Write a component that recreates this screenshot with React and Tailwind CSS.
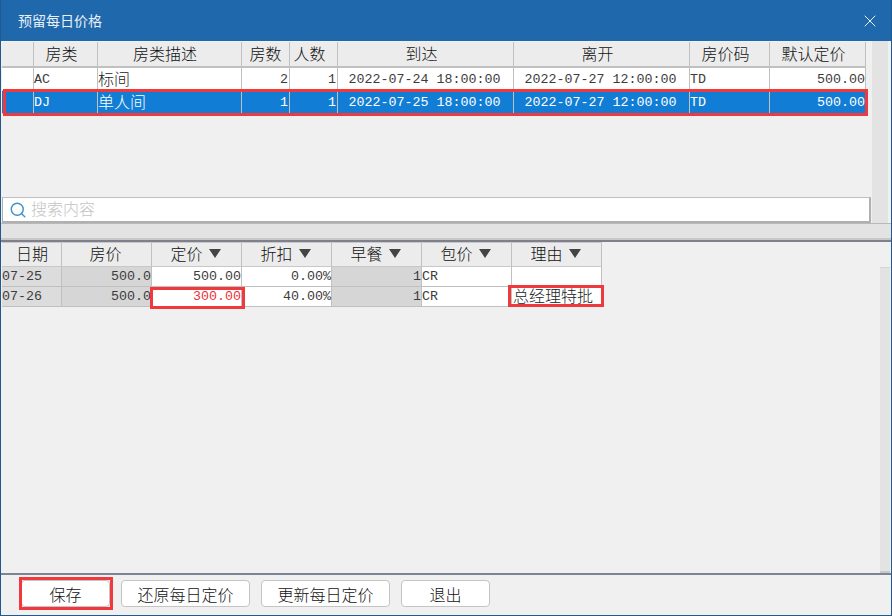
import React from "react";
import { Search, X } from "lucide-react";

const cjk = "font-['Noto_Sans_CJK_SC','Liberation_Sans',sans-serif] text-[16px] font-light";
const mono = "font-['Liberation_Mono','Noto_Sans_CJK_SC',monospace] text-[13.33px] text-[#3c3c3c]";

function Cell({ w, align = "l", kind = "mono", extra = "", children }) {
  const a = align === "r" ? "justify-end" : align === "c" ? "justify-center" : "justify-start";
  return (
    <div className={`${w} ${a} ${kind === "cjk" ? cjk : mono} ${extra} flex h-full shrink-0 items-center whitespace-nowrap border-r border-[#c0c0c0] leading-none`}>
      {children}
    </div>
  );
}

const topW = ["w-[32px]", "w-[64px]", "w-[144px]", "w-[48px]", "w-[48px]", "w-[176px]", "w-[176px]", "w-[80px]", "w-[96px]"];
const topHead = ["", "房类", "房类描述", "房数", "人数", "到达", "离开", "房价码", "默认定价"];
const topHeadPad = ["", "pr-[8px]", "pr-[9px]", "", "pr-[8px]", "pr-[8px]", "pr-[8px]", "pr-[8px]", "pr-[8px]"];
const topAlign = ["l", "l", "l", "r", "r", "c", "c", "l", "r"];
const topRowPad = ["", "", "", "pr-px", "pr-px", "pr-[2px]", "pr-[2px]", "", ""];
const topRows = [
  ["", "AC", "标间", "2", "1", "2022-07-24 18:00:00", "2022-07-27 12:00:00", "TD", "500.00"],
  ["", "DJ", "单人间", "1", "1", "2022-07-25 18:00:00", "2022-07-27 12:00:00", "TD", "500.00"],
];

const lowW = ["w-[60px]", "w-[90px]", "w-[90px]", "w-[90px]", "w-[90px]", "w-[90px]", "w-[90px]"];
const lowHead = ["日期", "房价", "定价", "折扣", "早餐", "包价", "理由"];
const lowHeadPad = ["pl-[1px]", "pr-[2px]", "pr-[2px]", "pr-[2px]", "pr-[2px]", "pr-[2px]", "pr-[2px]"];
const lowArrow = [false, false, true, true, true, true, true];
const lowAlign = ["l", "r", "r", "r", "r", "l", "l"];
const lowBg = ["bg-[#dcdcdc]", "bg-[#d6d6d6]", "bg-white", "bg-white", "bg-[#d6d6d6]", "bg-white", "bg-white"];
const lowRows = [
  ["07-25", "500.0", "500.00", "0.00%", "1", "CR", ""],
  ["07-26", "500.0", "300.00", "40.00%", "1", "CR", "总经理特批"],
];

function Btn({ children, extra = "" }) {
  return (
    <button className={`${cjk} ${extra} flex h-[27px] items-center justify-center rounded-[4px] border border-[#c4c4c4] bg-white leading-none text-[#111]`}>
      {children}
    </button>
  );
}

export default function App() {
  return (
    <div className="flex h-[616px] w-[892px] flex-col overflow-hidden border-x border-b border-[#1f5a8e] bg-[#f0f0f0] text-[#222]">
      <div className="flex h-[41px] shrink-0 items-center justify-between bg-[#2068ac] pl-[17px] pr-[11px] font-['Noto_Sans_CJK_SC',sans-serif] text-[14px] text-[#e8f0f8]">
        <span>预留每日价格</span>
        <X size={20} strokeWidth={1.1} color="#ffffff" />
      </div>

      <div className="flex h-[182px] shrink-0 pl-px pr-[3px]">
        <div className="flex w-[870px] flex-col">
          <div className="flex-1">
            <div className="mt-px flex h-[26px] w-max border-b-2 border-[#c0c0c0] bg-[#ececec] text-[#111]">
              {topHead.map((t, i) => (
                <Cell key={i} w={topW[i]} align="c" kind="cjk" extra={`${topHeadPad[i]} pb-[2px]`}>{t}</Cell>
              ))}
            </div>
            {topRows.map((r, ri) => (
              <div key={ri} className={`relative flex h-[23px] w-max border-b border-[#c0c0c0] ${ri === 1 ? "bg-[#127dd4]" : "bg-white"}`}>
                {r.map((t, i) => (
                  <Cell key={i} w={topW[i]} align={topAlign[i]} kind={i === 2 ? "cjk" : "mono"} extra={`${ri === 1 ? "border-[#a8cdec] !text-white" : ""} ${topRowPad[i]} ${i === 2 ? "pb-[3px]" : "pt-px"}`}>{t}</Cell>
                ))}
                {ri === 1 && <div className="absolute left-px top-[-2px] h-[27px] w-[865px] border-[3px] border-[#f0393c]" />}
              </div>
            ))}
          </div>
          <div className="flex h-[26px] shrink-0 items-center gap-[4px] border border-b-2 border-r-2 border-[#b0b0b0] border-t-[#c0c0c0] bg-white pl-[6px]">
            <Search size={18} strokeWidth={1.9} color="#3f93c6" />
            <span className={`${cjk} pb-[3px] leading-none text-[#c4c4c4]`}>搜索内容</span>
          </div>
        </div>
        <div className="ml-px w-[16px] bg-[#e3e3e3]" />
      </div>

      <div className="h-[17px] shrink-0 border-t border-[#b8b8b8] border-b-2 border-b-[#c8c8c8] bg-[#e3e3e3]" />

      <div className="flex h-[335px] shrink-0 flex-col border-y-2 border-b-[#7c8594] border-t-[#80808c] pl-px">
        <div className="flex flex-1">
          <div className="flex-1">
            <div className="flex h-[25px] w-max border-y border-[#c8c8c8] bg-[#ececec] text-[#111]">
              {lowHead.map((t, i) => (
                <Cell key={i} w={lowW[i]} align="c" kind="cjk" extra={`gap-[6px] pb-[3px] ${lowHeadPad[i]}`}>
                  <span>{t}</span>
                  {lowArrow[i] && <span className="block h-0 w-0 border-x-[6px] border-t-[9px] border-x-transparent border-t-[#444]" />}
                </Cell>
              ))}
            </div>
            {lowRows.map((r, ri) => (
              <div key={ri} className="flex h-[20px] w-max border-b border-[#c0c0c0]">
                {r.map((t, i) => (
                  <Cell key={i} w={lowW[i]} align={lowAlign[i]} kind={i === 6 ? "cjk" : "mono"} extra={`${lowBg[i]} ${i === 2 && ri === 1 ? "!text-[#f0303a]" : ""} ${i === 6 ? "pb-[3px] pl-[1px]" : ""}`}>
                    {t}
                  </Cell>
                ))}
              </div>
            ))}
          </div>
          <div className="mt-[25px] w-[10px] shrink-0 border-t border-[#d4d4d4] border-b-2 border-b-[#c8c8c8] bg-[#e3e3e3]" />
          <div className="w-px shrink-0" />
        </div>
      </div>

      <div className="flex flex-1 items-start gap-[11px] pl-[20px] pt-[5px]">
        <Btn extra="w-[89px]">保存</Btn>
        <Btn extra="w-[129px]">还原每日定价</Btn>
        <Btn extra="w-[129px]">更新每日定价</Btn>
        <Btn extra="w-[89px]">退出</Btn>
      </div>

      <div className="absolute left-[150px] top-[287px] h-[22px] w-[95px] border-[3px] border-[#f0393c]" />
      <div className="absolute left-[508px] top-[285px] h-[22px] w-[96px] border-[3px] border-[#f0393c]" />
      <div className="absolute left-[19px] top-[577px] h-[33px] w-[94px] border-[3px] border-[#f0393c]" />
    </div>
  );
}
